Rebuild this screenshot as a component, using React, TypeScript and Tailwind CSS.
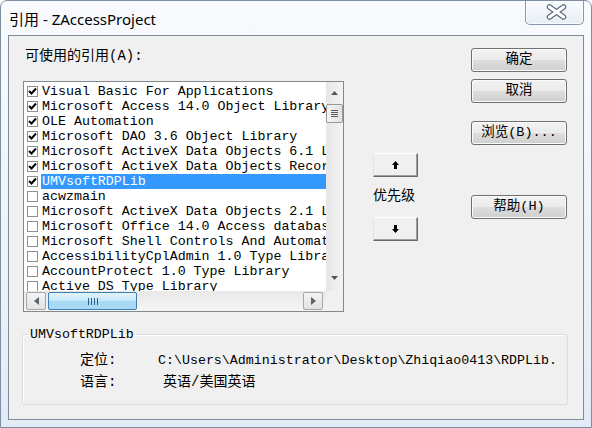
import type { ReactNode } from "react";

const uiFont = "font-['Liberation_Mono','Noto_Sans_CJK_SC',monospace]";

const refs = [
  { name: "Visual Basic For Applications", checked: true },
  { name: "Microsoft Access 14.0 Object Library", checked: true },
  { name: "OLE Automation", checked: true },
  { name: "Microsoft DAO 3.6 Object Library", checked: true },
  { name: "Microsoft ActiveX Data Objects 6.1 Library", checked: true },
  { name: "Microsoft ActiveX Data Objects Recordset 6.0 Library", checked: true },
  { name: "UMVsoftRDPLib", checked: true, selected: true },
  { name: "acwzmain", checked: false },
  { name: "Microsoft ActiveX Data Objects 2.1 Library", checked: false },
  { name: "Microsoft Office 14.0 Access database engine Object Library", checked: false },
  { name: "Microsoft Shell Controls And Automation", checked: false },
  { name: "AccessibilityCplAdmin 1.0 Type Library", checked: false },
  { name: "AccountProtect 1.0 Type Library", checked: false },
  { name: "Active DS Type Library", checked: false },
];

const Button = ({ children, className = "" }: { children: ReactNode; className?: string }) => (
  <div
    className={`flex h-[24px] w-[96px] items-center justify-center rounded-[3px] border border-[#707070] bg-[linear-gradient(to_bottom,#f2f2f2_0%,#ebebeb_48%,#dddddd_52%,#cfcfcf_100%)] text-[13.5px] leading-none text-black shadow-[inset_0_0_0_1px_#fbfbfb] ${className}`}
  >
    {children}
  </div>
);

const ArrowButton = ({ down = false }: { down?: boolean }) => (
  <div className="flex h-[24px] w-[45px] items-center justify-center border border-t-[#ffffff] border-l-[#e3e3e3] border-r-[#696969] border-b-[#696969] bg-[#f0f0f0] shadow-[inset_-1px_-1px_0_#a0a0a0]">
    <svg width="7" height="8" viewBox="0 0 7 8" className={down ? "rotate-180" : ""}>
      <polygon points="3.5,0 7,4 0,4" fill="#000" />
      <rect x="2" y="4" width="3" height="4" fill="#000" />
    </svg>
  </div>
);

const Checkbox = ({ checked }: { checked: boolean }) => (
  <div className="ml-[3px] h-[11px] w-[11px] shrink-0 border border-[#8e8f8f] bg-white">
    {checked && (
      <svg width="9" height="9" viewBox="0 0 9 9">
        <path d="M1 4 L3.5 6.5 L8 1.5" stroke="#000" strokeWidth="2" fill="none" />
      </svg>
    )}
  </div>
);

const ScrollBtn = ({ dir }: { dir: "left" | "right" }) => (
  <div className="flex w-[20px] items-center justify-center rounded-[2px] border border-[#a7a7a7] bg-[linear-gradient(to_bottom,#f4f4f4,#e2e2e2)]">
    <svg width="5" height="8" viewBox="0 0 5 8">
      <polygon points={dir === "left" ? "5,0 5,8 0,4" : "0,0 0,8 5,4"} fill="#5a6470" />
    </svg>
  </div>
);

const App = () => {
  return (
    <div className="flex h-[428px] w-[592px] flex-col overflow-hidden rounded-t-[7px] border border-[#7f8fa2] bg-[linear-gradient(to_bottom,#f8fafd_0%,#eef3f9_60%,#e2ebf6_100%)] px-[7px] pb-[7px]">
      {/* title bar */}
      <div className="flex h-[34px] items-start">
        <div className="mt-[7px] ml-[1px] font-['Noto_Sans','Noto_Sans_CJK_SC',sans-serif] text-[15px] leading-[22px] text-black">
          引用 - ZAccessProject
        </div>
        <div className="ml-auto -mt-[1px] flex h-[25px] w-[59px] items-center justify-center rounded-b-[5px] border border-t-0 border-[#8997a8] bg-[linear-gradient(to_bottom,#ffffff40,#dfe8f2a0)] shadow-[inset_0_0_0_1px_#ffffffb0]">
          <svg width="21" height="16" viewBox="0 0 21 16" className="mt-[-1px] ml-[3px]">
            <path d="M3.5 3 L17.5 13 M17.5 3 L3.5 13" stroke="#5b6a7b" strokeWidth="5.5" strokeLinecap="round" />
            <path d="M3.5 3 L17.5 13 M17.5 3 L3.5 13" stroke="#ffffff" strokeWidth="3.2" strokeLinecap="round" />
          </svg>
        </div>
      </div>

      {/* client area */}
      <div className={`flex flex-1 flex-col border border-[#7d8a98] bg-[#f0f0f0] text-black ${uiFont}`}>
        <div className="flex items-start">
          {/* references list */}
          <div className="ml-[14px] w-[321px]">
            <div className="mt-[13px] h-[15px] pl-[2px] text-[14px] leading-[15px]">可使用的引用(A):</div>
            <div className="mt-[17px] flex h-[231px] flex-col border border-[#828790] bg-white">
              <div className="flex min-h-0 flex-1">
                <div className="min-w-0 flex-1 overflow-hidden pt-[2px]">
                  {refs.map((r) => (
                    <div key={r.name} className="flex h-[15px] items-center">
                      <Checkbox checked={r.checked} />
                      <div
                        className={`ml-[3px] h-[15px] flex-1 whitespace-nowrap pl-[1px] text-[13.3px] leading-[16px] ${
                          r.selected ? "bg-[#3399ff] text-white" : ""
                        }`}
                      >
                        {r.name}
                      </div>
                    </div>
                  ))}
                </div>
                {/* vertical scrollbar */}
                <div className="flex w-[17px] flex-col bg-[linear-gradient(to_right,#e6e6e6,#f4f4f4)]">
                  <div className="flex h-[21px] items-center justify-center">
                    <svg width="7" height="4" viewBox="0 0 7 4">
                      <polygon points="3.5,0 7,4 0,4" fill="#4d5866" />
                    </svg>
                  </div>
                  <div className="mt-[1px] flex h-[19px] flex-col items-center justify-center gap-[1px] rounded-[2px] border border-[#979797] bg-[linear-gradient(to_right,#f3f3f3,#e2e2e2)]">
                    <div className="h-[1px] w-[7px] bg-[#5b5b5b]" />
                    <div className="h-[1px] w-[7px] bg-[#5b5b5b]" />
                    <div className="h-[1px] w-[7px] bg-[#5b5b5b]" />
                    <div className="h-[1px] w-[7px] bg-[#5b5b5b]" />
                  </div>
                  <div className="flex-1" />
                  <div className="flex h-[26px] items-center justify-center">
                    <svg width="7" height="4" viewBox="0 0 7 4">
                      <polygon points="0,0 7,0 3.5,4" fill="#4d5866" />
                    </svg>
                  </div>
                </div>
              </div>
              {/* horizontal scrollbar */}
              <div className="flex h-[20px]">
                <div className="flex flex-1 bg-[linear-gradient(to_bottom,#e8e8e8,#f5f5f5)] py-[1px] pr-[3px] pl-[2px]">
                  <ScrollBtn dir="left" />
                  <div className="ml-[2px] flex w-[89px] items-center justify-center gap-[2px] rounded-[2px] border border-[#3c7fb1] bg-[linear-gradient(to_bottom,#e3f4fc,#c4e8fa_50%,#a6d9f4_51%,#a9daf5)]">
                    <div className="h-[7px] w-[1px] bg-[#2e5f84]" />
                    <div className="h-[7px] w-[1px] bg-[#2e5f84]" />
                    <div className="h-[7px] w-[1px] bg-[#2e5f84]" />
                    <div className="h-[7px] w-[1px] bg-[#2e5f84]" />
                  </div>
                  <div className="flex-1" />
                  <ScrollBtn dir="right" />
                </div>
                <div className="w-[17px] bg-[#f0f0f0]" />
              </div>
            </div>
          </div>

          {/* priority */}
          <div className="ml-[29px] flex w-[45px] flex-col items-center pt-[117px]">
            <ArrowButton />
            <div className="mt-[11px] h-[16px] w-[45px] text-[14px] leading-[16px]">优先级</div>
            <div className="mt-[13px]">
              <ArrowButton down />
            </div>
          </div>

          {/* buttons */}
          <div className="ml-[53px] flex w-[96px] flex-col pt-[12px]">
            <Button>确定</Button>
            <Button className="mt-[7px]">取消</Button>
            <Button className="mt-[18px]">浏览(B)...</Button>
            <Button className="mt-[50px]">帮助(H)</Button>
          </div>
        </div>

        {/* details */}
        <fieldset className="mt-[15px] ml-[13px] h-[78px] w-[546px] rounded-[3px] border border-[#d5dfe5] pl-[5px] shadow-[inset_1px_1px_0_#ffffff]">
          <legend className="px-[2px] text-[13.3px] leading-[15px]">UMVsoftRDPLib</legend>
          <div className="mt-[11px] flex h-[15px] text-[13.3px] leading-[15px]">
            <div className="ml-[52px] w-[78px] text-[14px]">定位:</div>
            <div className="whitespace-nowrap">C:\Users\Administrator\Desktop\Zhiqiao0413\RDPLib.</div>
          </div>
          <div className="mt-[7px] flex h-[15px] text-[13.3px] leading-[15px]">
            <div className="ml-[52px] w-[78px] text-[14px]">语言:</div>
            <div className="pl-[5px] text-[14px]">英语/美国英语</div>
          </div>
        </fieldset>
      </div>
    </div>
  );
};

export default App;
